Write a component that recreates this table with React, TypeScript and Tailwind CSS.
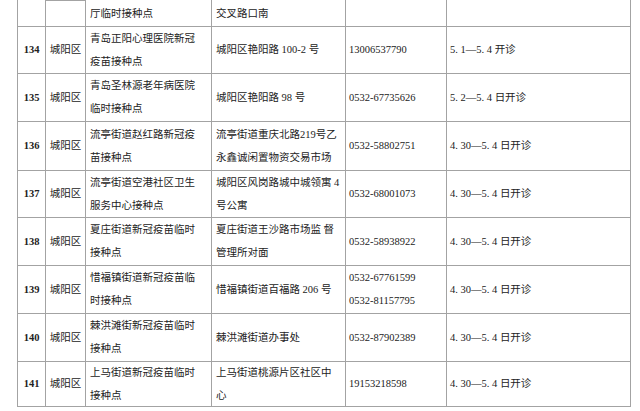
import React from 'react';

type Row = {
  no: string;
  area: string;
  name: string[];
  addr: string[];
  phone: string[];
  date: string;
  h: string;
};

const ROWS: Row[] = [
  { no: '134', area: '城阳区', name: ['青岛正阳心理医院新冠', '疫苗接种点'], addr: ['城阳区艳阳路 100-2 号'], phone: ['13006537790'], date: '5. 1—5. 4 开诊', h: 'h-[47px]' },
  { no: '135', area: '城阳区', name: ['青岛圣林源老年病医院', '临时接种点'], addr: ['城阳区艳阳路 98 号'], phone: ['0532-67735626'], date: '5. 2—5. 4 日开诊', h: 'h-[48px]' },
  { no: '136', area: '城阳区', name: ['流亭街道赵红路新冠疫', '苗接种点'], addr: ['流亭街道重庆北路219号乙', '永鑫诚闲置物资交易市场'], phone: ['0532-58802751'], date: '4. 30—5. 4 日开诊', h: 'h-[49px]' },
  { no: '137', area: '城阳区', name: ['流亭街道空港社区卫生', '服务中心接种点'], addr: ['城阳区风岗路城中城领寓 4', '号公寓'], phone: ['0532-68001073'], date: '4. 30—5. 4 日开诊', h: 'h-[47px]' },
  { no: '138', area: '城阳区', name: ['夏庄街道新冠疫苗临时', '接种点'], addr: ['夏庄街道王沙路市场监 督', '管理所对面'], phone: ['0532-58938922'], date: '4. 30—5. 4 日开诊', h: 'h-[48px]' },
  { no: '139', area: '城阳区', name: ['惜福镇街道新冠疫苗临', '时接种点'], addr: ['惜福镇街道百福路 206 号'], phone: ['0532-67761599', '0532-81157795'], date: '4. 30—5. 4 日开诊', h: 'h-[48px]' },
  { no: '140', area: '城阳区', name: ['棘洪滩街新冠疫苗临时', '接种点'], addr: ['棘洪滩街道办事处'], phone: ['0532-87902389'], date: '4. 30—5. 4 日开诊', h: 'h-[48px]' },
  { no: '141', area: '城阳区', name: ['上马街道新冠疫苗临时', '接种点'], addr: ['上马街道桃源片区社区中', '心'], phone: ['19153218598'], date: '4. 30—5. 4 日开诊', h: 'h-[45px]' },
];

function Lines({ lines }: { lines: string[] }) {
  return (
    <div className="flex flex-col">
      {lines.map((l) => (
        <div key={l} className="h-[23px] flex items-center whitespace-nowrap">{l}</div>
      ))}
    </div>
  );
}

const cell = 'flex items-center border-r border-[#a3a3a3] shrink-0';

export default function App() {
  return (
    <div
      className="w-[640px] h-[411px] overflow-hidden bg-white text-[#222] text-[10.5px]"
      style={{ fontFamily: "'Liberation Serif', 'Noto Sans CJK SC', serif" }}
    >
      <div className="ml-[17px] w-[614px]">
        {/* 上一行续页 */}
        <div className="flex h-[27px] border-b border-l border-[#a3a3a3]">
          <div className={`${cell} w-[28px]`} />
          <div className={`${cell} w-[40px] border-t`} />
          <div className={`${cell} w-[126px] items-end pl-[4px] pb-[4px]`}>厅临时接种点</div>
          <div className={`${cell} w-[134px] items-end pl-[4px] pb-[4px]`}>交叉路口南</div>
          <div className={`${cell} w-[101px]`} />
          <div className={`${cell} w-[184px]`} />
        </div>
        {ROWS.map((r) => (
          <div key={r.no} className={`flex ${r.h} border-b border-l border-[#a3a3a3]`}>
            <div className={`${cell} w-[28px] justify-center font-bold`}>{r.no}</div>
            <div className={`${cell} w-[40px] justify-center`}>{r.area}</div>
            <div className={`${cell} w-[126px] pl-[4px]`}>
              <Lines lines={r.name} />
            </div>
            <div className={`${cell} w-[134px] pl-[4px]`}>
              <Lines lines={r.addr} />
            </div>
            <div className={`${cell} w-[101px] pl-[3px]`}>
              <Lines lines={r.phone} />
            </div>
            <div className={`${cell} w-[184px] pl-[3px]`}>{r.date}</div>
          </div>
        ))}
      </div>
    </div>
  );
}
